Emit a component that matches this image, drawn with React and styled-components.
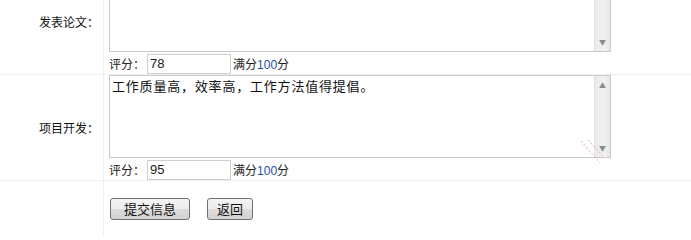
import styled, { createGlobalStyle } from "styled-components";

const GlobalStyle = createGlobalStyle`
  body {
    margin: 0;
    background: #fff;
    font-family: "Noto Sans CJK SC", "Liberation Sans", sans-serif;
    font-size: 12px;
    color: #222;
    overflow: hidden;
  }
`;

const Form = styled.div`
  width: 691px;
  margin-top: -32px;
`;

const Row = styled.div`
  display: grid;
  grid-template-columns: 104px 1fr;
  border-top: 1px solid #efefef;
`;

const Label = styled.div`
  display: flex;
  align-items: center;
  justify-content: flex-end;
  padding-right: 4px;
  border-right: 1px solid #efefef;
  white-space: nowrap;
  color: #111;
`;

const Cell = styled.div`
  padding-left: 5px;
  padding-top: ${(p) => p.$top || 0}px;
  min-height: ${(p) => p.$min || 0}px;
  box-sizing: border-box;
  display: flex;
  flex-direction: column;
`;

const Box = styled.div`
  position: relative;
  box-sizing: border-box;
  width: 502px;
  height: 83px;
  margin-bottom: 1px;
  border: 1px solid #c9c9c9;
  background: #fff;
  display: flex;
`;

const Text = styled.div`
  flex: 1;
  padding: 2px 2px;
  font-size: 13px;
  letter-spacing: 0.8px;
  line-height: 16px;
  color: #111;
`;

const Scroll = styled.div`
  width: 16px;
  background: linear-gradient(to right, #eaeaea, #f2f2f2 60%, #e6e6e6);
  border-left: 1px solid #e2e2e2;
  display: flex;
  flex-direction: column;
  justify-content: ${(p) => p.$align};
  align-items: center;
  padding: 5px 0;
  box-sizing: border-box;
  color: #8a8a8a;
  font-size: 7px;
  line-height: 8px;
`;

const Grip = styled.svg`
  position: absolute;
  right: 6px;
  bottom: -7px;
`;

const ScoreLine = styled.div`
  height: 21px;
  display: flex;
  align-items: center;
  gap: 2px;
`;

const ScoreInput = styled.div`
  box-sizing: border-box;
  width: 84px;
  height: 20px;
  border: 1px solid #cfcfcf;
  padding: 0 2px;
  font-family: "Liberation Sans", sans-serif;
  font-size: 13px;
  line-height: 18px;
  color: #1a1a1a;
`;

const Blue = styled.span`
  color: #1d4fa8;
  font-family: "Liberation Sans", sans-serif;
  font-size: 12px;
`;

const Buttons = styled.div`
  display: flex;
  gap: 17px;
  padding-left: 1px;
`;

const Button = styled.button`
  box-sizing: border-box;
  height: 22px;
  width: ${(p) => p.$w}px;
  border: 1px solid #707070;
  border-radius: 3px;
  background: linear-gradient(#f4f4f4, #ebebeb 50%, #dcdcdc 51%, #d2d2d2);
  font-family: "Noto Sans CJK SC", sans-serif;
  font-size: 13px;
  color: #111;
  padding: 0;
  line-height: 20px;
`;

function Section({ label, text, score, scrollAlign }) {
  return (
    <Row>
      <Label>{label}</Label>
      <Cell>
        <Box>
          <Text>{text}</Text>
          <Scroll $align={scrollAlign}>
            {scrollAlign === "flex-end" ? "▼" : "▲"}
            {scrollAlign === "space-between" && <span>▼</span>}
          </Scroll>
          {text && (
            <Grip width="24" height="24" viewBox="0 0 24 24">
              <path d="M1 1 L20 23 M8 0 L24 17" stroke="#e3a6b4" strokeWidth="1" strokeDasharray="2 2" fill="none" />
            </Grip>
          )}
        </Box>
        <ScoreLine>
          <span>评分：</span>
          <ScoreInput>{score}</ScoreInput>
          <span>
            满分<Blue>100</Blue>分
          </span>
        </ScoreLine>
      </Cell>
    </Row>
  );
}

export default function App() {
  return (
    <>
      <GlobalStyle />
      <Form>
        <Section label="发表论文：" text="" score="78" scrollAlign="flex-end" />
        <Section
          label="项目开发："
          text="工作质量高，效率高，工作方法值得提倡。"
          score="95"
          scrollAlign="space-between"
        />
        <Row>
          <Label />
          <Cell $top={17} $min={56}>
            <Buttons>
              <Button $w={80}>提交信息</Button>
              <Button $w={46}>返回</Button>
            </Buttons>
          </Cell>
        </Row>
      </Form>
    </>
  );
}
